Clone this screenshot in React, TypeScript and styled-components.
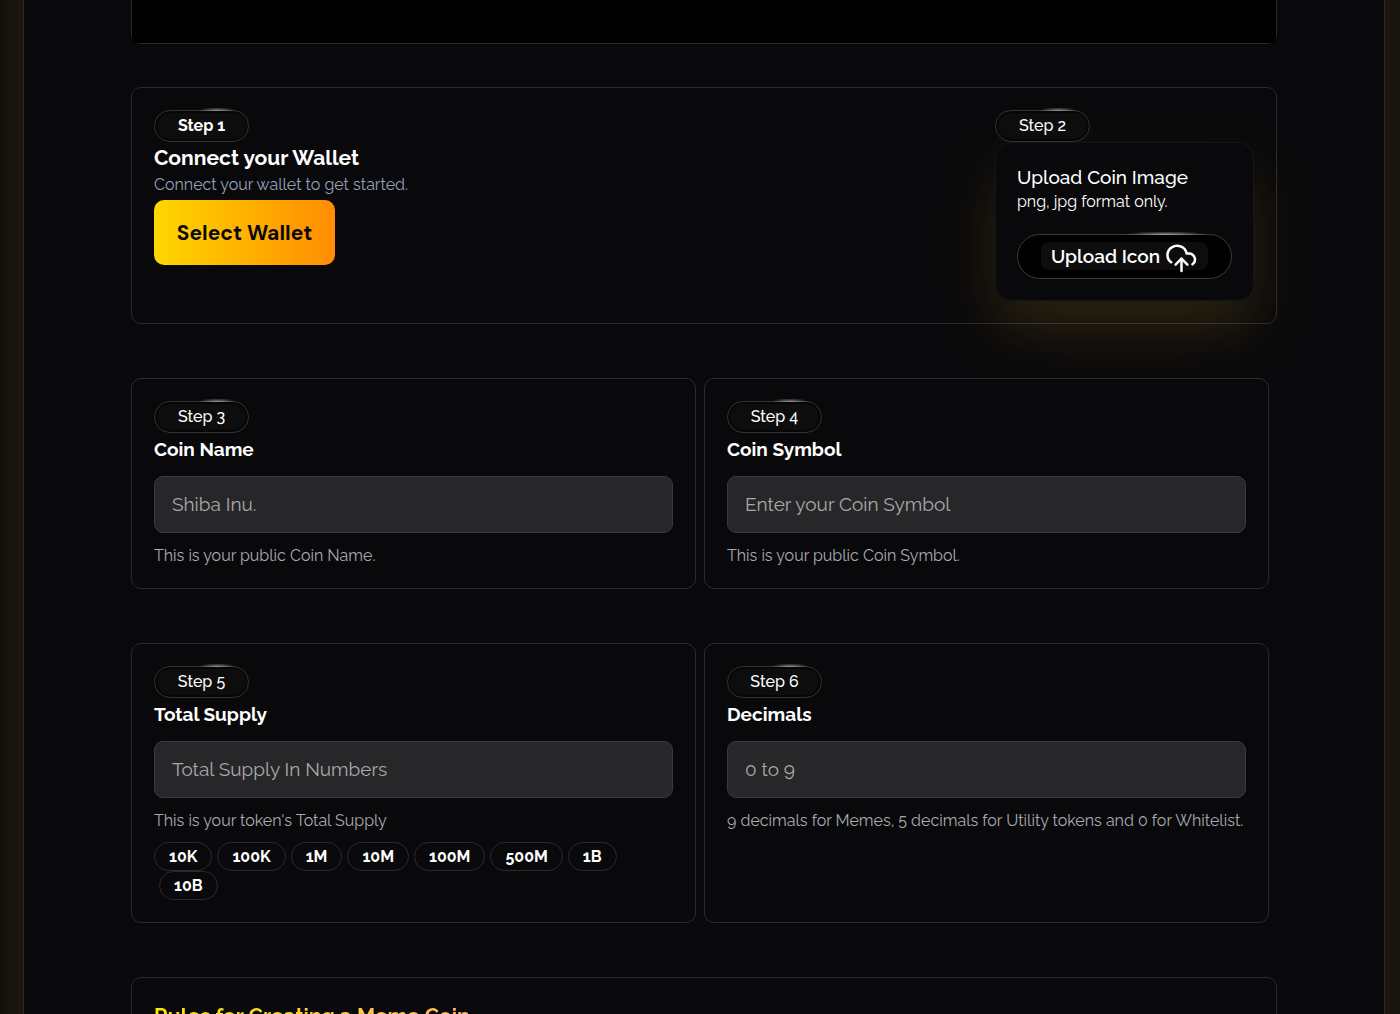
import React, { useId } from "react";
import styled, { createGlobalStyle, css } from "styled-components";

const GlobalStyle = createGlobalStyle`
  *, *::before, *::after { box-sizing: border-box; }
  body {
    margin: 0;
    background: #09090b;
    color: #fff;
    font-family: Raleway, Lato, "Open Sans", sans-serif;
    font-size: 16px;
    line-height: 24px;
  }
  h2, h3, p { margin: 0; }
  button, input { font: inherit; color: inherit; }
`;

const Viewport = styled.div`
  height: 100vh;
  overflow: hidden;
  padding: 0 15px 0 23px;
`;

const Panel = styled.main`
  display: flex;
  flex-direction: column;
  gap: 54px;
  min-height: 100%;
  margin-top: -100px;
  padding: 0 107px 107px;
  border: solid #2b2b2e;
  border-width: 0 1px;
  background: #09090b;
  box-shadow: 0 0 66px rgba(255, 190, 60, 0.17);
`;

const surface = css`
  border: 1px solid #2b2b2e;
  border-radius: 10px;
`;

const Intro = styled.div`
  display: flex;
  flex-direction: column;
  gap: 43px;
`;

const VideoFrame = styled.div`
  ${surface}
  height: 144px;
`;

const Video = styled.div`
  height: 100%;
  background: #000;
`;

const Card = styled.section`
  ${surface}
  padding: 22px 22px 20px;
`;

const SplitCard = styled(Card)`
  display: flex;
  justify-content: space-between;
  padding-bottom: 22px;
`;

const Row = styled.div`
  display: grid;
  grid-template-columns: 1fr 1fr;
  gap: 8px;
  margin-right: 8px;
`;

const Stack = styled.div`
  display: flex;
  flex-direction: column;
  align-items: flex-start;
`;

const Badge = styled.span<{ $strong?: boolean }>`
  position: relative;
  display: inline-flex;
  align-items: center;
  justify-content: center;
  width: 95px;
  height: 32px;
  padding-bottom: 1px;
  border: 1px solid #323235;
  border-radius: 16px;
  background: #0d0d0d;
  box-shadow: inset 0 0 0 2px #060607;
  font-weight: ${(p) => (p.$strong ? 700 : 500)};
  &::before {
    content: "";
    position: absolute;
    top: -3px;
    right: 12px;
    width: 38px;
    height: 3px;
    background: radial-gradient(ellipse 19px 4px at bottom, rgba(255, 255, 255, 0.5), transparent);
  }
`;

const Title = styled.h2`
  font-size: 21px;
  line-height: 31px;
  font-weight: 700;
`;

const Lead = styled.p`
  color: #94a3b8;
`;

const WalletButton = styled.button`
  margin-top: 3px;
  width: 181px;
  height: 65px;
  padding: 0;
  border: 0;
  border-radius: 10px;
  background: linear-gradient(to right, #ffd700, #ff8c00);
  color: #09090b;
  font-family: "DM Sans", Inter, sans-serif;
  font-size: 21px;
  font-weight: 700;
`;

const UploadBox = styled.div`
  display: flex;
  flex-direction: column;
  width: 259px;
  padding: 21px;
  border: 1px solid #14151c;
  border-radius: 16px;
  background: #09090b;
  box-shadow: 0 29px 62px rgba(255, 185, 40, 0.14);
`;

const UploadTitle = styled.h3`
  font-size: 19px;
  line-height: 26px;
  font-weight: 500;
`;

const UploadButton = styled.button`
  position: relative;
  display: flex;
  align-items: center;
  justify-content: center;
  height: 45px;
  margin-top: 20px;
  padding: 0 0 1px;
  border: 1px solid #3a3a3d;
  border-radius: 23px;
  background: #000;
  font-size: 19px;
  font-weight: 600;
  &::before {
    content: "";
    position: absolute;
    top: -3px;
    right: 22px;
    width: 86px;
    height: 3px;
    background: radial-gradient(ellipse 43px 4px at bottom, rgba(255, 255, 255, 0.55), transparent);
  }
`;

const UploadLabel = styled.span`
  display: flex;
  align-items: center;
  justify-content: center;
  gap: 5px;
  width: 167px;
  height: 28px;
  border-radius: 8px;
  background: #0d0d0d;
`;

const FieldLabel = styled.label`
  padding-top: 3px;
  font-size: 19px;
  line-height: 26px;
  font-weight: 700;
`;

const FieldInput = styled.input`
  width: 100%;
  height: 57px;
  margin: 14px 0 11px;
  padding: 0 17px 2px;
  border: 1px solid #3a3a3c;
  border-radius: 9px;
  background: #27272a;
  font-size: 19px;
  &::placeholder { color: #a9a9a9; opacity: 1; }
`;

const Hint = styled.p`
  color: #a9a9b2;
`;

const Chips = styled.div`
  display: flex;
  flex-wrap: wrap;
  width: 100%;
  padding: 9px 0 2px;
`;

const Chip = styled.button`
  height: 29px;
  padding: 0 14px;
  border: 1px solid #2b2b2e;
  border-radius: 15px;
  background: #09090b;
  font-weight: 700;
  &:not(:first-child) { margin-left: 5px; }
`;

const RulesTitle = styled.h2`
  width: fit-content;
  font-size: 21px;
  line-height: 31px;
  font-weight: 700;
  color: transparent;
  background: linear-gradient(to right, #ffe600, #ffb86b);
  background-clip: text;
`;

function UploadCloudIcon() {
  return (
    <svg width="33" height="33" viewBox="0 -2 24 24" fill="none" stroke="currentColor" strokeWidth="1.8" strokeLinecap="round" strokeLinejoin="round" aria-hidden="true">
      <path d="M4.5 14.2A7 6.7 0 1 1 15.7 7.8h1.7a4.5 4.4 0 0 1 2.6 7.9" />
      <path d="M12 11.6v8.9" />
      <path d="m16.3 15.9-4.3-4.3-4.3 4.3" />
    </svg>
  );
}

interface FieldProps {
  step: number;
  label: string;
  placeholder: string;
  hint: string;
  children?: React.ReactNode;
}

function FieldCard({ step, label, placeholder, hint, children }: FieldProps) {
  const id = useId();
  return (
    <Card>
      <Stack>
        <Badge>Step {step}</Badge>
        <FieldLabel htmlFor={id}>{label}</FieldLabel>
        <FieldInput id={id} type="text" placeholder={placeholder} />
        <Hint>{hint}</Hint>
        {children}
      </Stack>
    </Card>
  );
}

const supplies = ["10K", "100K", "1M", "10M", "100M", "500M", "1B", "10B"];

export default function App() {
  return (
    <Viewport>
      <GlobalStyle />
      <Panel>
        <Intro>
          <VideoFrame>
            <Video />
          </VideoFrame>
          <SplitCard>
            <Stack>
              <Badge $strong>Step 1</Badge>
              <Title>Connect your Wallet</Title>
              <Lead>Connect your wallet to get started.</Lead>
              <WalletButton type="button">Select Wallet</WalletButton>
            </Stack>
            <Stack>
              <Badge>Step 2</Badge>
              <UploadBox>
                <UploadTitle>Upload Coin Image</UploadTitle>
                <p>png, jpg format only.</p>
                <UploadButton type="button">
                  <UploadLabel>
                    Upload Icon
                    <UploadCloudIcon />
                  </UploadLabel>
                </UploadButton>
              </UploadBox>
            </Stack>
          </SplitCard>
        </Intro>
        <Row>
          <FieldCard step={3} label="Coin Name" placeholder="Shiba Inu." hint="This is your public Coin Name." />
          <FieldCard step={4} label="Coin Symbol" placeholder="Enter your Coin Symbol" hint="This is your public Coin Symbol." />
        </Row>
        <Row>
          <FieldCard step={5} label="Total Supply" placeholder="Total Supply In Numbers" hint="This is your token's Total Supply">
            <Chips>
              {supplies.map((s) => (
                <Chip key={s} type="button">{s}</Chip>
              ))}
            </Chips>
          </FieldCard>
          <FieldCard step={6} label="Decimals" placeholder="0 to 9" hint="9 decimals for Memes, 5 decimals for Utility tokens and 0 for Whitelist." />
        </Row>
        <Card>
          <RulesTitle>Rules for Creating a Meme Coin</RulesTitle>
        </Card>
      </Panel>
    </Viewport>
  );
}
